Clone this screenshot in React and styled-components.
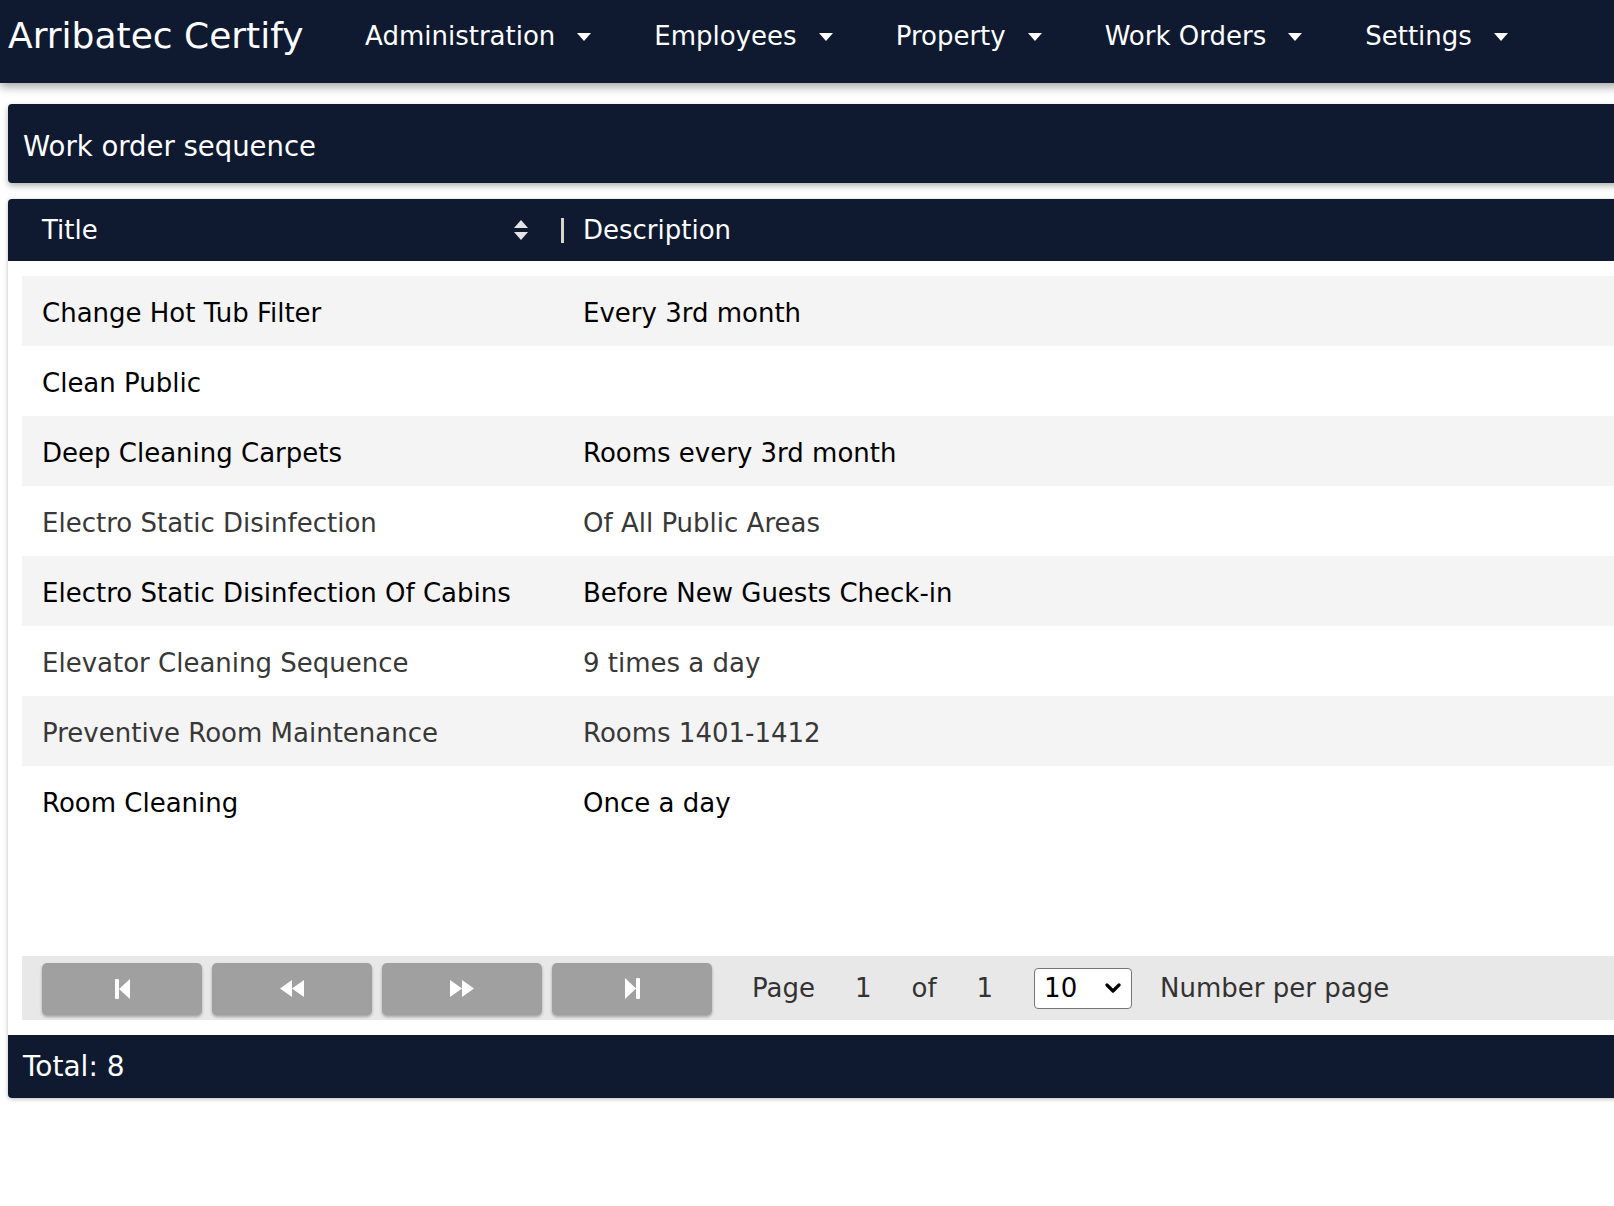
import React from 'react';
import styled, { createGlobalStyle } from 'styled-components';

const colors = {
  navy: '#0f1a31',
  rowAlt: '#f4f4f4',
  pagerBg: '#e8e8e8',
  pagerBtn: '#a0a0a0',
  textDark: '#000',
  textMuted: '#383838',
};

const GlobalStyle = createGlobalStyle`
  html, body {
    margin: 0;
    padding: 0;
    background: #fff;
    overflow: hidden;
  }
  body {
    font-family: "DejaVu Sans", Verdana, sans-serif;
  }
`;

const Page = styled.div`
  width: 1700px;
  min-height: 1206px;
`;

const Nav = styled.nav`
  position: relative;
  z-index: 2;
  height: 83px;
  box-sizing: border-box;
  padding: 0 0 12px 8px;
  display: flex;
  align-items: center;
  background: ${colors.navy};
  box-shadow: 0 4px 9px rgba(0, 0, 0, 0.35);
`;

const Brand = styled.div`
  color: #fff;
  font-size: 36px;
  line-height: 42px;
  margin-right: 30px;
`;

const NavItem = styled.div`
  display: flex;
  align-items: center;
  gap: 22px;
  padding: 0 31.5px;
  color: #fff;
  font-size: 26px;
  line-height: 30px;
  cursor: pointer;
`;

const Caret = styled.span`
  width: 0;
  height: 0;
  border-left: 7.5px solid transparent;
  border-right: 7.5px solid transparent;
  border-top: 8px solid #fff;
  margin-top: 2px;
`;

const Main = styled.main`
  padding: 21px 0 0 8px;
  display: flex;
  flex-direction: column;
  gap: 16px;
`;

const TitleCard = styled.div`
  height: 79px;
  box-sizing: border-box;
  display: flex;
  align-items: center;
  padding: 5px 0 0 15px;
  background: ${colors.navy};
  color: #fff;
  font-size: 27.5px;
  border-radius: 4px 0 0 4px;
  box-shadow: 0 3px 6px rgba(0, 0, 0, 0.3);
`;

const TableCard = styled.section`
  background: #fff;
  border-radius: 4px 0 0 4px;
  box-shadow: 0 1px 4px rgba(0, 0, 0, 0.28);
`;

const HeadRow = styled.div`
  height: 62px;
  display: flex;
  align-items: center;
  padding-left: 34px;
  background: ${colors.navy};
  color: #fff;
  font-size: 26px;
  border-radius: 4px 0 0 0;
`;

const TitleHead = styled.div`
  width: 486px;
  display: flex;
  align-items: center;
  justify-content: space-between;
`;

const SortIcon = styled.svg`
  width: 14px;
  height: 20px;
  display: block;
`;

const Divider = styled.span`
  width: 3px;
  height: 25px;
  margin: 0 19px 0 33px;
  background: #d8d4cc;
`;

const Body = styled.div`
  padding: 15px 0 15px 14px;
`;

const Rows = styled.div`
  min-height: 680px;
`;

const Row = styled.div`
  display: grid;
  grid-template-columns: 541px 1fr;
  align-items: center;
  height: 70px;
  box-sizing: border-box;
  padding: 3px 0 0 20px;
  background: ${p => (p.$striped ? colors.rowAlt : '#fff')};
  color: ${p => (p.$muted ? colors.textMuted : colors.textDark)};
  font-size: 26px;
`;

const Pager = styled.div`
  height: 64px;
  box-sizing: border-box;
  display: flex;
  align-items: center;
  padding-left: 20px;
  background: ${colors.pagerBg};
  color: #333;
  font-size: 26px;
`;

const PagerButtons = styled.div`
  display: flex;
  gap: 10px;
  margin-right: 40px;
`;

const PagerButton = styled.button`
  width: 160px;
  height: 52px;
  margin-top: 1px;
  border: none;
  border-radius: 5px;
  background: ${colors.pagerBtn};
  box-shadow: 0 2px 3px rgba(0, 0, 0, 0.3);
  display: flex;
  align-items: center;
  justify-content: center;
  cursor: pointer;
  padding: 0;
`;

const PagerText = styled.span`
  margin-right: ${p => p.$gap || 40}px;
`;

const SelectWrap = styled.div`
  position: relative;
  margin-right: 28px;
`;

const PerPage = styled.select`
  width: 98px;
  height: 41px;
  box-sizing: border-box;
  appearance: none;
  border: 1px solid #767676;
  border-radius: 4px;
  background: #fff;
  padding: 0 0 0 9px;
  font-family: "DejaVu Sans", Verdana, sans-serif;
  font-size: 26px;
  color: #000;
`;

const Chevron = styled.svg`
  position: absolute;
  right: 11px;
  top: 15px;
  width: 16px;
  height: 11px;
  pointer-events: none;
`;

const Footer = styled.div`
  height: 63px;
  display: flex;
  align-items: center;
  padding-left: 15px;
  background: ${colors.navy};
  color: #fff;
  font-size: 28px;
  border-radius: 0 0 0 4px;
`;

const rows = [
  { title: 'Change Hot Tub Filter', description: 'Every 3rd month' },
  { title: 'Clean Public', description: '' },
  { title: 'Deep Cleaning Carpets', description: 'Rooms every 3rd month' },
  { title: 'Electro Static Disinfection', description: 'Of All Public Areas', muted: true },
  { title: 'Electro Static Disinfection Of Cabins', description: 'Before New Guests Check-in' },
  { title: 'Elevator Cleaning Sequence', description: '9 times a day', muted: true },
  { title: 'Preventive Room Maintenance', description: 'Rooms 1401-1412', muted: true },
  { title: 'Room Cleaning', description: 'Once a day' },
];

const menu = ['Administration', 'Employees', 'Property', 'Work Orders', 'Settings'];

const FirstIcon = () => (
  <svg width="15" height="20" viewBox="0 0 15 20">
    <rect x="0" y="0" width="4" height="20" rx="1" fill="#fff" />
    <path d="M15 0 L4 10 L15 20 Z" fill="#fff" />
  </svg>
);

const PrevIcon = () => (
  <svg width="24" height="17" viewBox="0 0 24 17">
    <path d="M12 0 L0 8.5 L12 17 Z M24 0 L12 8.5 L24 17 Z" fill="#fff" />
  </svg>
);

const NextIcon = () => (
  <svg width="24" height="17" viewBox="0 0 24 17">
    <path d="M0 0 L12 8.5 L0 17 Z M12 0 L24 8.5 L12 17 Z" fill="#fff" />
  </svg>
);

const LastIcon = () => (
  <svg width="15" height="21" viewBox="0 0 15 21">
    <path d="M0 0 L11 10.5 L0 21 Z" fill="#fff" />
    <rect x="11" y="0" width="4" height="21" rx="1" fill="#fff" />
  </svg>
);

export default function App() {
  return (
    <Page>
      <GlobalStyle />
      <Nav>
        <Brand>Arribatec Certify</Brand>
        {menu.map(item => (
          <NavItem key={item}>
            {item}
            <Caret />
          </NavItem>
        ))}
      </Nav>

      <Main>
        <TitleCard>Work order sequence</TitleCard>

        <TableCard>
          <HeadRow>
            <TitleHead>
              <span>Title</span>
              <SortIcon viewBox="0 0 14 20">
                <path d="M7 0 L14 8 L0 8 Z M0 12 L14 12 L7 20 Z" fill="#e4e4e4" />
              </SortIcon>
            </TitleHead>
            <Divider />
            <span>Description</span>
          </HeadRow>

          <Body>
            <Rows>
              {rows.map((r, i) => (
                <Row key={r.title} $striped={i % 2 === 0} $muted={r.muted}>
                  <span>{r.title}</span>
                  <span>{r.description}</span>
                </Row>
              ))}
            </Rows>

            <Pager>
              <PagerButtons>
                <PagerButton aria-label="First page"><FirstIcon /></PagerButton>
                <PagerButton aria-label="Previous page"><PrevIcon /></PagerButton>
                <PagerButton aria-label="Next page"><NextIcon /></PagerButton>
                <PagerButton aria-label="Last page"><LastIcon /></PagerButton>
              </PagerButtons>
              <PagerText>Page</PagerText>
              <PagerText>1</PagerText>
              <PagerText>of</PagerText>
              <PagerText $gap={41}>1</PagerText>
              <SelectWrap>
                <PerPage defaultValue="10">
                  <option value="10">10</option>
                  <option value="25">25</option>
                  <option value="50">50</option>
                </PerPage>
                <Chevron viewBox="0 0 16 11">
                  <path d="M2 2 L8 8 L14 2" stroke="#000" strokeWidth="3.2" fill="none" strokeLinecap="round" strokeLinejoin="round" />
                </Chevron>
              </SelectWrap>
              <span>Number per page</span>
            </Pager>
          </Body>

          <Footer>Total: 8</Footer>
        </TableCard>
      </Main>
    </Page>
  );
}
